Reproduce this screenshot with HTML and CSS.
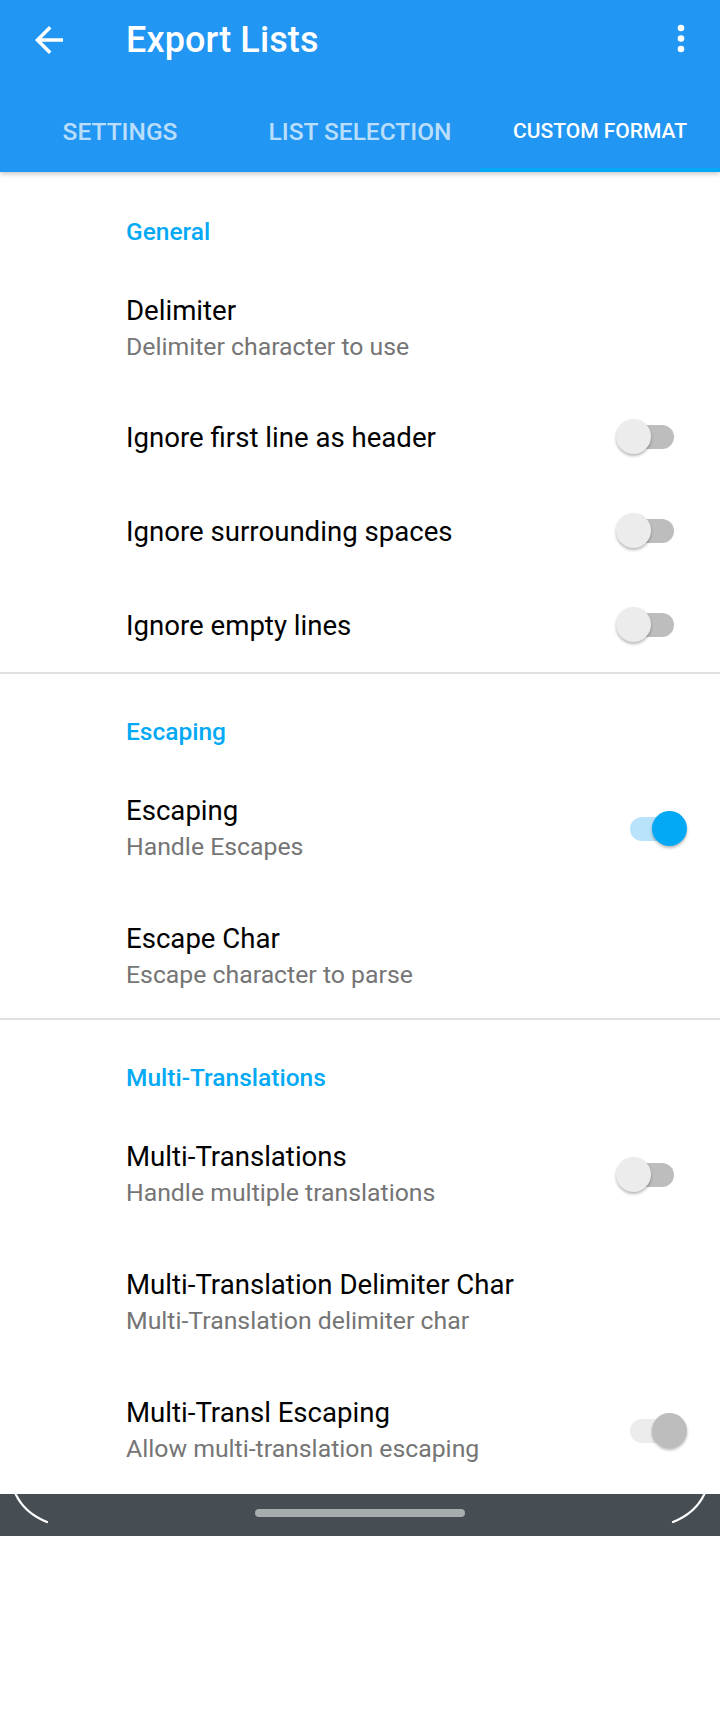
FILE: index.html
```html
<!DOCTYPE html>
<html lang="en">
<head>
<meta charset="utf-8">
<title>Export Lists</title>
<link rel="stylesheet" href="styles.css">
</head>
<body>
<div class="screen">
  <header class="appbar">
    <div class="toolbar">
      <svg class="back-icon" viewBox="0 0 24 24" aria-hidden="true"><path d="M20 11H7.83l5.59-5.59L12 4l-8 8 8 8 1.41-1.41L7.83 13H20v-2z" fill="#fff"/></svg>
      <h1 class="title">Export Lists</h1>
      <svg class="more-icon" viewBox="0 0 24 42" aria-hidden="true"><circle cx="12" cy="10" r="3.3" fill="#fff"/><circle cx="12" cy="20.5" r="3.3" fill="#fff"/><circle cx="12" cy="31" r="3.3" fill="#fff"/></svg>
    </div>
    <nav class="tabs">
      <div class="tab">SETTINGS</div>
      <div class="tab">LIST SELECTION</div>
      <div class="tab tab-active">CUSTOM FORMAT</div>
    </nav>
  </header>

  <main class="content">
    <section class="group">
      <div class="category category-first">General</div>
      <div class="pref pref-two pref-short">
        <div class="pref-text"><div class="pref-title">Delimiter</div><div class="pref-sub">Delimiter character to use</div></div>
      </div>
      <div class="pref pref-one">
        <div class="pref-text"><div class="pref-title">Ignore first line as header</div></div>
        <div class="switch"><span class="track"></span><span class="thumb"></span></div>
      </div>
      <div class="pref pref-one">
        <div class="pref-text"><div class="pref-title">Ignore surrounding spaces</div></div>
        <div class="switch"><span class="track"></span><span class="thumb"></span></div>
      </div>
      <div class="pref pref-one">
        <div class="pref-text"><div class="pref-title">Ignore empty lines</div></div>
        <div class="switch"><span class="track"></span><span class="thumb"></span></div>
      </div>
    </section>
    <section class="group">
      <div class="category">Escaping</div>
      <div class="pref pref-two">
        <div class="pref-text"><div class="pref-title">Escaping</div><div class="pref-sub">Handle Escapes</div></div>
        <div class="switch switch-on"><span class="track"></span><span class="thumb"></span></div>
      </div>
      <div class="pref pref-two pref-short">
        <div class="pref-text"><div class="pref-title">Escape Char</div><div class="pref-sub">Escape character to parse</div></div>
      </div>
    </section>
    <section class="group">
      <div class="category">Multi-Translations</div>
      <div class="pref pref-two">
        <div class="pref-text"><div class="pref-title">Multi-Translations</div><div class="pref-sub">Handle multiple translations</div></div>
        <div class="switch"><span class="track"></span><span class="thumb"></span></div>
      </div>
      <div class="pref pref-two">
        <div class="pref-text"><div class="pref-title">Multi-Translation Delimiter Char</div><div class="pref-sub">Multi-Translation delimiter char</div></div>
      </div>
      <div class="pref pref-two">
        <div class="pref-text"><div class="pref-title">Multi-Transl Escaping</div><div class="pref-sub">Allow multi-translation escaping</div></div>
        <div class="switch switch-on switch-disabled"><span class="track"></span><span class="thumb"></span></div>
      </div>
    </section>
  </main>

  <div class="navbar">
    <svg class="corners" viewBox="0 0 720 42" aria-hidden="true">
      <path d="M14 -4 Q22 18 47 28" fill="none" stroke="#fff" stroke-width="2.2" stroke-linecap="round"/>
      <path d="M706 -4 Q698 18 673 28" fill="none" stroke="#fff" stroke-width="2.2" stroke-linecap="round"/>
    </svg>
    <div class="handle"></div>
  </div>
</div>
</body>
</html>
```

FILE: styles.css
```css
* { box-sizing: border-box; }

html, body {
  margin: 0;
  padding: 0;
  background: #ffffff;
}

body {
  font-family: "Roboto", "Noto Sans", "Liberation Sans", sans-serif;
  -webkit-font-smoothing: antialiased;
}

.screen {
  width: 720px;
  height: 1712px;
  background: #ffffff;
  overflow: hidden;
}

/* App bar */
.appbar {
  position: relative;
  z-index: 2;
  background: #2196F3;
  box-shadow: 0 2px 5px rgba(0, 0, 0, 0.22);
}

.toolbar {
  height: 80px;
  display: flex;
  align-items: center;
}

.back-icon {
  width: 42px;
  height: 42px;
  margin-left: 28px;
  flex: none;
}

.title {
  margin: 0 0 0 56px;
  font-size: 36px;
  font-weight: 500;
  color: #ffffff;
  letter-spacing: 0.1px;
  flex: 1;
  line-height: 1;
}

.more-icon {
  width: 24px;
  height: 42px;
  margin-right: 27px;
  margin-top: -2px;
  flex: none;
}

.tabs {
  height: 92px;
  display: grid;
  grid-template-columns: repeat(3, 1fr);
}

.tab {
  display: flex;
  align-items: center;
  justify-content: center;
  padding-top: 10px;
  font-size: 24.5px;
  font-weight: 500;
  color: rgba(255, 255, 255, 0.7);
  white-space: nowrap;
}

.tab-active {
  color: #ffffff;
  font-size: 21px;
  box-shadow: inset 0 -4px 0 #03A9F4;
}

/* Content */
.content {
  height: 1322px;
  overflow: hidden;
}

.group + .group {
  border-top: 2px solid #e0e0e0;
}

.category {
  padding: 43px 0 17px 126px;
  line-height: 30px;
  font-size: 24.5px;
  font-weight: 500;
  color: #03A9F4;
}

.category-first {
  padding-top: 45px;
}

.pref {
  display: flex;
  align-items: center;
  padding-left: 126px;
  padding-right: 33px;
}

.pref-one {
  height: 94px;
}

.pref-two {
  height: 128px;
  padding-top: 28px;
  padding-bottom: 27px;
}

.pref-short {
  height: 126px;
  padding-bottom: 25px;
}

.pref-text {
  flex: 1;
  min-width: 0;
}

.pref-title {
  font-size: 27.6px;
  line-height: 37px;
  color: #000000;
  white-space: nowrap;
}

.pref-sub {
  font-size: 24.8px;
  line-height: 36px;
  color: #757575;
  white-space: nowrap;
}

/* Switch */
.switch {
  position: relative;
  width: 71px;
  height: 36px;
  flex: none;
}

.track {
  position: absolute;
  left: 14px;
  top: 6px;
  width: 44px;
  height: 24px;
  border-radius: 12px;
  background: #bdbdbd;
}

.thumb {
  position: absolute;
  left: 0;
  top: 0;
  width: 35px;
  height: 35px;
  border-radius: 50%;
  background: #ececec;
  box-shadow: 0 2px 3px rgba(0, 0, 0, 0.28);
}

.switch-on .track {
  background: #b8e3fb;
}

.switch-on .thumb {
  left: auto;
  right: 0;
  background: #03A9F4;
}

.switch-disabled .track {
  background: #ececec;
}

.switch-disabled .thumb {
  background: #bdbdbd;
}

/* Navigation bar */
.navbar {
  position: relative;
  height: 42px;
  background: #474e53;
  display: flex;
  align-items: center;
  justify-content: center;
}

.corners {
  position: absolute;
  left: 0;
  top: 0;
  width: 720px;
  height: 42px;
}

.handle {
  width: 210px;
  height: 8px;
  border-radius: 4px;
  background: #a7acaf;
  margin-top: -4px;
}
```
